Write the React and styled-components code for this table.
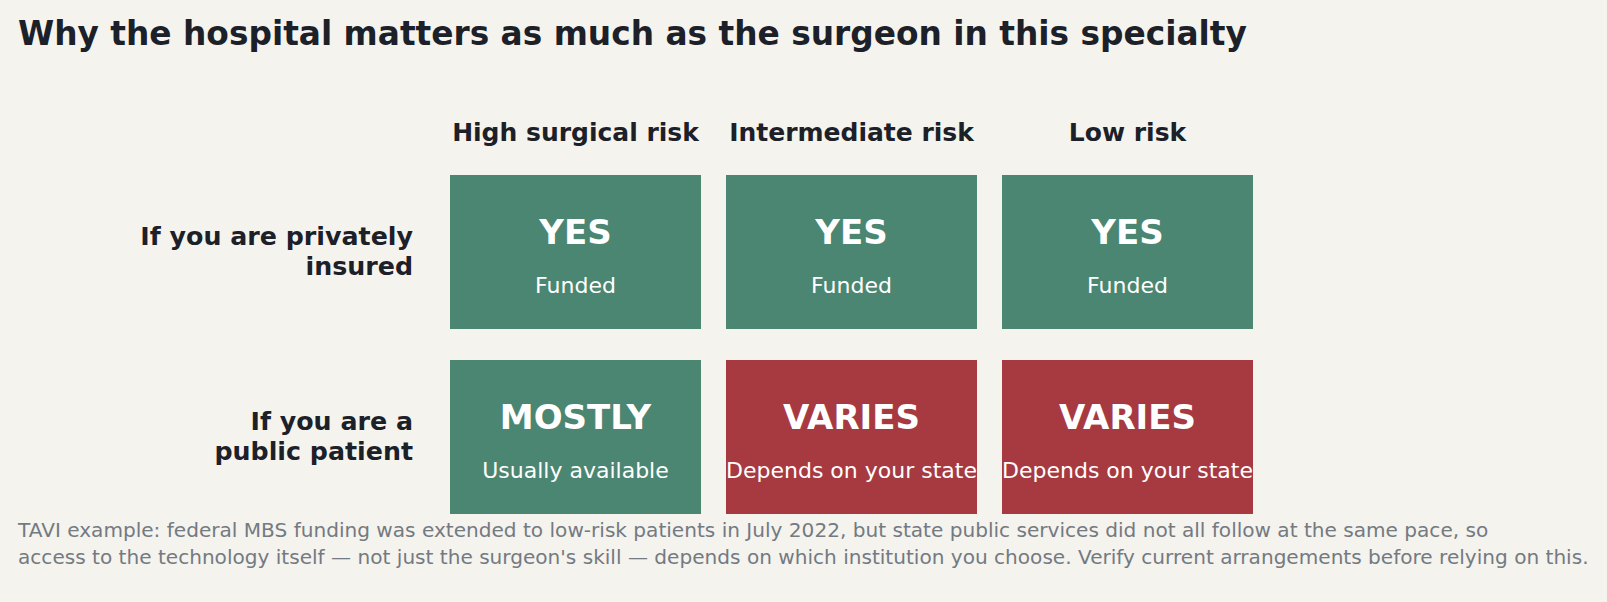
import styled, { createGlobalStyle } from 'styled-components'

const GlobalStyle = createGlobalStyle`
  html, body {
    margin: 0;
    background: #f5f3ed;
  }
  body {
    font-family: "DejaVu Sans", Verdana, sans-serif;
  }
`;

const columns = ['High surgical risk', 'Intermediate risk', 'Low risk'];

const rows = [
  {
    label: ['If you are privately', 'insured'],
    cells: [
      { verdict: 'YES', note: 'Funded', tone: 'good' },
      { verdict: 'YES', note: 'Funded', tone: 'good' },
      { verdict: 'YES', note: 'Funded', tone: 'good' },
    ],
  },
  {
    label: ['If you are a', 'public patient'],
    cells: [
      { verdict: 'MOSTLY', note: 'Usually available', tone: 'good' },
      { verdict: 'VARIES', note: 'Depends on your state', tone: 'bad' },
      { verdict: 'VARIES', note: 'Depends on your state', tone: 'bad' },
    ],
  },
];

const App = () => {
  return (
    <>
      <GlobalStyle />
      <Page>
        <Title>Why the hospital matters as much as the surgeon in this specialty</Title>
        <Matrix>
          <span />
          {columns.map((col) => (
            <ColumnHead key={col}>{col}</ColumnHead>
          ))}
          {rows.map((row) => (
            <Row key={row.label.join(' ')}>
              <RowLabel>
                {row.label[0]}
                <br />
                {row.label[1]}
              </RowLabel>
              {row.cells.map((cell, i) => (
                <Cell key={i} $tone={cell.tone}>
                  <Verdict>{cell.verdict}</Verdict>
                  <Note>{cell.note}</Note>
                </Cell>
              ))}
            </Row>
          ))}
        </Matrix>
        <Footnote>
          TAVI example: federal MBS funding was extended to low-risk patients in July 2022, but state public services did not all follow at the same pace, so
          <br />
          access to the technology itself — not just the surgeon's skill — depends on which institution you choose. Verify current arrangements before relying on this.
        </Footnote>
      </Page>
    </>
  );
};

export default App

const Page = styled.div`
  width: 1607px;
  height: 602px;
  box-sizing: border-box;
  padding: 15px 0 0 18px;
  overflow: hidden;
`;

const Title = styled.h1`
  margin: 0;
  font-size: 32.8px;
  font-weight: 700;
  line-height: normal;
  color: #1c2028;
  white-space: nowrap;
`;

const Matrix = styled.div`
  display: grid;
  grid-template-columns: 407px repeat(3, 251px);
  grid-auto-rows: auto;
  column-gap: 25px;
  margin-top: 65px;
`;

const ColumnHead = styled.div`
  font-size: 25px;
  font-weight: 700;
  color: #1c2028;
  text-align: center;
  white-space: nowrap;
  line-height: normal;
  margin-bottom: 28px;
`;

const Row = styled.div`
  display: contents;

  & + & > * {
    margin-top: 31px;
  }
`;

const RowLabel = styled.div`
  align-self: center;
  padding-right: 12px;
  text-align: right;
  font-size: 25.3px;
  font-weight: 700;
  line-height: 30px;
  color: #1c2028;
`;

const Cell = styled.div`
  height: 154px;
  box-sizing: border-box;
  padding-top: 5px;
  background: ${({ $tone }) => ($tone === 'bad' ? '#a73a41' : '#4b8672')};
  color: #ffffff;
  display: flex;
  flex-direction: column;
  align-items: center;
  justify-content: center;
  gap: 21px;
  white-space: nowrap;
`;

const Verdict = styled.div`
  font-size: 34px;
  font-weight: 700;
  line-height: normal;
`;

const Note = styled.div`
  font-size: 22px;
  line-height: normal;
`;

const Footnote = styled.p`
  margin: 3px 0 0;
  font-size: 20.08px;
  line-height: 27px;
  color: #737a82;
  white-space: nowrap;
`;
